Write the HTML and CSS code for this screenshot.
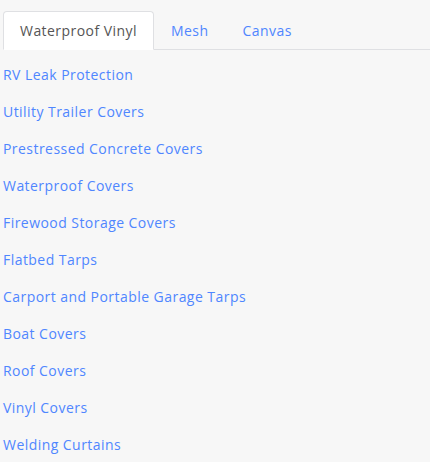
FILE: index.html
```html
<!DOCTYPE html>
<html>
<head>
<meta charset="utf-8">
<link rel="stylesheet" href="styles.css">
</head>
<body>
<div class="page">
  <ul class="tabs">
    <li class="tab active">Waterproof Vinyl</li>
    <li class="tab">Mesh</li>
    <li class="tab">Canvas</li>
  </ul>
  <ul class="links">
    <li><a href="#">RV Leak Protection</a></li>
    <li><a href="#">Utility Trailer Covers</a></li>
    <li><a href="#">Prestressed Concrete Covers</a></li>
    <li><a href="#">Waterproof Covers</a></li>
    <li><a href="#">Firewood Storage Covers</a></li>
    <li><a href="#">Flatbed Tarps</a></li>
    <li><a href="#">Carport and Portable Garage Tarps</a></li>
    <li><a href="#">Boat Covers</a></li>
    <li><a href="#">Roof Covers</a></li>
    <li><a href="#">Vinyl Covers</a></li>
    <li><a href="#">Welding Curtains</a></li>
  </ul>
</div>
</body>
</html>
```
FILE: styles.css
```css
html, body {
  margin: 0;
  padding: 0;
  background: #f7f7f7;
}
body {
  font-family: "Open Sans", "Liberation Sans", sans-serif;
  font-size: 14px;
  letter-spacing: 0.45px;
}
.page {
  padding: 11px 0 0 3px;
}
.tabs {
  list-style: none;
  margin: 0;
  padding: 0;
  display: flex;
  border-bottom: 1px solid #dfe0e3;
}
.tab {
  padding: 8px 16px;
  line-height: 21px;
  color: #4f86ff;
  border: 1px solid transparent;
  border-radius: 4px 4px 0 0;
  margin-bottom: -1px;
}
.tab.active {
  background: #fff;
  color: #555;
  border-color: #dfe0e3 #dfe0e3 #fff;
}
.links {
  list-style: none;
  margin: 0;
  padding: 6px 0 0 0;
}
.links li {
  padding: 8px 0;
  line-height: 21px;
}
.links a {
  color: #4f86ff;
  text-decoration: none;
}
```
